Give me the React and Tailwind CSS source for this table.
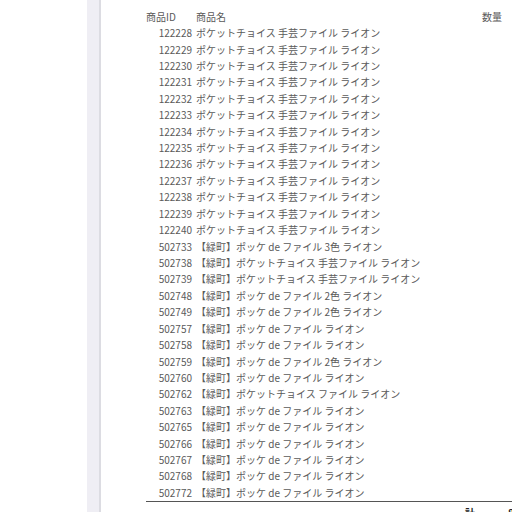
import React from "react";

const rows = [
  ["122228", "ポケットチョイス 手芸ファイル ライオン"],
  ["122229", "ポケットチョイス 手芸ファイル ライオン"],
  ["122230", "ポケットチョイス 手芸ファイル ライオン"],
  ["122231", "ポケットチョイス 手芸ファイル ライオン"],
  ["122232", "ポケットチョイス 手芸ファイル ライオン"],
  ["122233", "ポケットチョイス 手芸ファイル ライオン"],
  ["122234", "ポケットチョイス 手芸ファイル ライオン"],
  ["122235", "ポケットチョイス 手芸ファイル ライオン"],
  ["122236", "ポケットチョイス 手芸ファイル ライオン"],
  ["122237", "ポケットチョイス 手芸ファイル ライオン"],
  ["122238", "ポケットチョイス 手芸ファイル ライオン"],
  ["122239", "ポケットチョイス 手芸ファイル ライオン"],
  ["122240", "ポケットチョイス 手芸ファイル ライオン"],
  ["502733", "【緑町】ポッケ de ファイル 3色 ライオン"],
  ["502738", "【緑町】ポケットチョイス 手芸ファイル ライオン"],
  ["502739", "【緑町】ポケットチョイス 手芸ファイル ライオン"],
  ["502748", "【緑町】ポッケ de ファイル 2色 ライオン"],
  ["502749", "【緑町】ポッケ de ファイル 2色 ライオン"],
  ["502757", "【緑町】ポッケ de ファイル ライオン"],
  ["502758", "【緑町】ポッケ de ファイル ライオン"],
  ["502759", "【緑町】ポッケ de ファイル 2色 ライオン"],
  ["502760", "【緑町】ポッケ de ファイル ライオン"],
  ["502762", "【緑町】ポケットチョイス ファイル ライオン"],
  ["502763", "【緑町】ポッケ de ファイル ライオン"],
  ["502765", "【緑町】ポッケ de ファイル ライオン"],
  ["502766", "【緑町】ポッケ de ファイル ライオン"],
  ["502767", "【緑町】ポッケ de ファイル ライオン"],
  ["502768", "【緑町】ポッケ de ファイル ライオン"],
  ["502772", "【緑町】ポッケ de ファイル ライオン"],
];

export default function App() {
  return (
    <div
      className="flex h-[512px] w-[512px] overflow-hidden bg-white text-[10px] text-[#5a5a5a]"
      style={{ fontFamily: '"Noto Sans CJK JP", "Noto Sans", sans-serif' }}
    >
      {/* left blank + gutter */}
      <div className="w-[87px] shrink-0 bg-white" />
      <div className="w-[14px] shrink-0 border-r-2 border-[#dcdce2] bg-[#efeef4]" />

      {/* page */}
      <div className="flex-1 pl-[45px] pt-[8px]">
        <div className="flex h-[16.4px] items-center">
          <span className="w-[50px]">商品ID</span>
          <span className="flex-1">商品名</span>
          <span className="w-[30px]">数量</span>
        </div>
        {rows.map(([id, name]) => (
          <div key={id} className="flex h-[16.43px] items-center whitespace-nowrap">
            <span className="w-[46px] text-right">{id}</span>
            <span className="ml-[4px] flex-1">{name}</span>
          </div>
        ))}
        <div className="mt-[0.5px] flex h-[20px] items-start justify-end gap-[33px] border-t-[1.5px] border-[#555] pt-[3px] font-bold text-[#222]">
          <span>計</span>
          <span className="-mr-[4px] w-[8px]">8</span>
        </div>
      </div>
    </div>
  );
}
